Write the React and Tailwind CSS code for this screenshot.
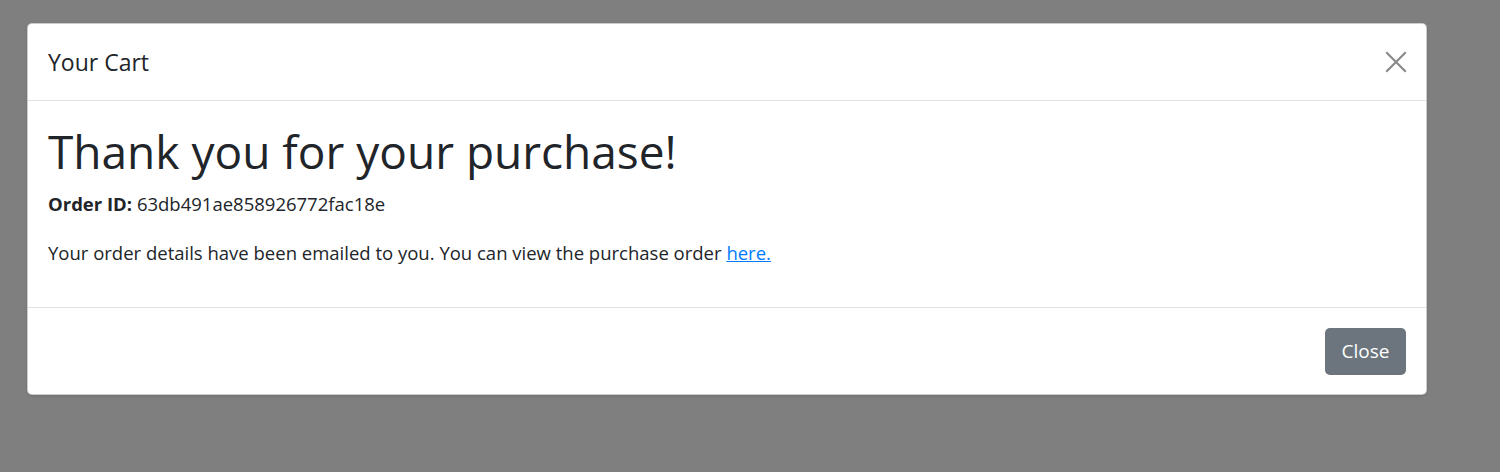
function CloseIcon() {
  return (
    <svg width="22" height="22" viewBox="0 0 22 22" fill="none" stroke="currentColor" strokeWidth="2.2" strokeLinecap="square">
      <path d="M2 2 L20 20 M20 2 L2 20" />
    </svg>
  );
}

function CartModal() {
  return (
    <div className="w-[1400px] bg-white rounded-[5px] border border-black/20 shadow-sm">
      <div className="h-[77px] flex items-center justify-between pl-5 pr-[19px] border-b border-[#dee2e6]">
        <h5 className="text-[23px] leading-[30px] text-[#212529]">Your Cart</h5>
        <button className="text-[#8a8a8a]">
          <CloseIcon />
        </button>
      </div>
      <div className="h-[206px] px-5 pt-[23px]">
        <h1 className="text-[46px] leading-[55px] text-[#212529]">Thank you for your purchase!</h1>
        <p className="text-[18.5px] leading-[27px] text-[#212529] mt-[11px]">
          <span className="font-bold">Order ID:</span> 63db491ae858926772fac18e
        </p>
        <p className="text-[18.5px] leading-[27px] text-[#212529] mt-[22px]">
          Your order details have been emailed to you. You can view the purchase order{" "}
          <a href="#" className="text-[#007bff] underline">here.</a>
        </p>
      </div>
      <div className="h-[87px] flex items-center justify-end pr-5 border-t border-[#dee2e6]">
        <button className="h-[47px] w-[81px] rounded-[5px] bg-[#6c757d] text-white text-[19px]">
          Close
        </button>
      </div>
    </div>
  );
}

export default function App() {
  return (
    <div
      className="w-[1500px] h-[472px] bg-[#7f7f7f] pt-[23px] pl-[27px]"
      style={{ fontFamily: '"Open Sans", "Noto Sans", sans-serif' }}
    >
      <CartModal />
    </div>
  );
}
